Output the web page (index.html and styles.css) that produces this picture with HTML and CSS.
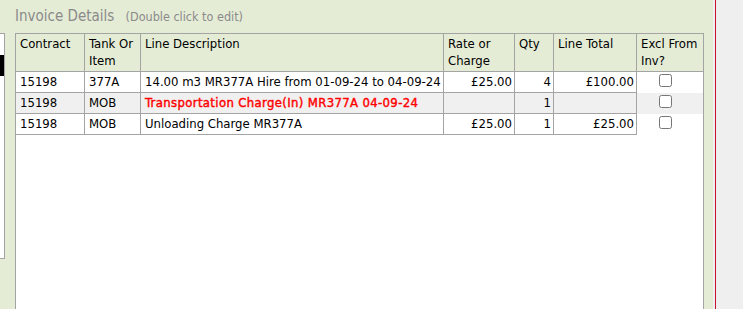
FILE: index.html
```html
<!doctype html>
<html>
<head>
    <meta charset="utf-8">
    <title>Invoice Details</title>

    <link rel="stylesheet" href="styles.css">
</head>

<body>
    <div class="page">
        <div class="panel">
            <!-- edge of the job list on the left -->
            <div class="side-list">
                <div class="side-mark"></div>
            </div>

            <div class="invoice">
                <h3 class="textHeader">Invoice Details <span class="hint">(Double click to edit)</span></h3>

                <div class="invoice-box">
                    <table id="invlines">
                        <tr class="heading">
                            <td class="c-contract">Contract</td>
                            <td class="c-tank">Tank Or Item</td>
                            <td class="c-desc">Line Description</td>
                            <td class="c-rate">Rate or Charge</td>
                            <td class="c-qty">Qty</td>
                            <td class="c-total">Line Total</td>
                            <td class="c-excl">Excl From Inv?</td>
                        </tr>
                        <tr class="item">
                            <td>15198</td>
                            <td>377A</td>
                            <td>14.00 m3 MR377A Hire from 01-09-24 to 04-09-24</td>
                            <td class="num">&pound;25.00</td>
                            <td class="num">4</td>
                            <td class="num">&pound;100.00</td>
                            <td class="excl"><input type="checkbox"></td>
                        </tr>
                        <tr class="item alt">
                            <td>15198</td>
                            <td>MOB</td>
                            <td class="charge">Transportation Charge(In) MR377A 04-09-24</td>
                            <td class="num"></td>
                            <td class="num">1</td>
                            <td class="num"></td>
                            <td class="excl"><input type="checkbox"></td>
                        </tr>
                        <tr class="item">
                            <td>15198</td>
                            <td>MOB</td>
                            <td>Unloading Charge MR377A</td>
                            <td class="num">&pound;25.00</td>
                            <td class="num">1</td>
                            <td class="num">&pound;25.00</td>
                            <td class="excl"><input type="checkbox"></td>
                        </tr>
                    </table>
                </div>
            </div>
        </div>
        <div class="divider"></div>
    </div>
</body>
</html>
```

FILE: styles.css
```css
html, body {
    margin: 0;
    height: 100%;
    overflow: hidden;
}

body {
    background: #efefef;
    font-family: "DejaVu Sans Condensed", Tahoma, "DejaVu Sans", sans-serif;
    font-size: 13px;
    color: #000;
}

.page {
    display: flex;
    height: 309px;
}

.panel {
    width: 713px;
    background: #e5ecd6;
    display: flex;
    align-items: flex-start;
}

.divider {
    width: 1px;
    margin-left: 2px;
    background: #c4122f;
}

.side-list {
    width: 4px;
    height: 224px;
    margin-top: 33px;
    background: #fff;
    border: 1px solid #a4a4a4;
    border-left: none;
}

.side-mark {
    width: 4px;
    height: 21px;
    margin-top: 21px;
    background: #000;
}

.invoice {
    margin-left: 10px;
    display: flex;
    flex-direction: column;
}

.textHeader {
    margin: 0;
    height: 33px;
    padding-top: 6px;
    box-sizing: border-box;
    font-size: 15px;
    font-weight: normal;
    line-height: 20px;
    color: #8a8a8a;
}

.hint {
    margin-left: 7px;
    font-size: 12.5px;
}

.invoice-box {
    width: 687px;
    height: 300px;
    background: #fff;
    border: 1px solid #a4a4a4;
}

.invoice-box table {
    width: 100%;
    table-layout: fixed;
    border-collapse: separate;
    border-spacing: 0;
    line-height: 17px;
}

.invoice-box table td {
    box-sizing: border-box;
    padding: 1px 2px 2px 4px;
    vertical-align: top;
    border-right: 1px solid #a4a4a4;
    border-bottom: 1px solid #a4a4a4;
}

.invoice-box table tr.item td {
    white-space: nowrap;
}

.invoice-box table tr.heading td {
    background: #e5ecd6;
}

.invoice-box table tr.heading td.c-excl {
    border-right: none;
}

.c-contract { width: 69px; }
.c-tank { width: 56px; }
.c-desc { width: 303px; }
.c-rate { width: 71px; }
.c-qty { width: 39px; }
.c-total { width: 83px; }

.invoice-box table tr.alt td {
    background: #f0f0f0;
}

.invoice-box table td.num {
    text-align: right;
    padding-right: 2px;
}

.invoice-box table td.charge {
    color: #f00;
    letter-spacing: 0.35px;
    -webkit-text-stroke: 0.4px #f00;
}

.invoice-box table td.excl {
    border: none;
    padding: 0;
}

.excl input {
    display: block;
    width: 13px;
    height: 13px;
    margin: 2px 0 0 22px;
}
```
